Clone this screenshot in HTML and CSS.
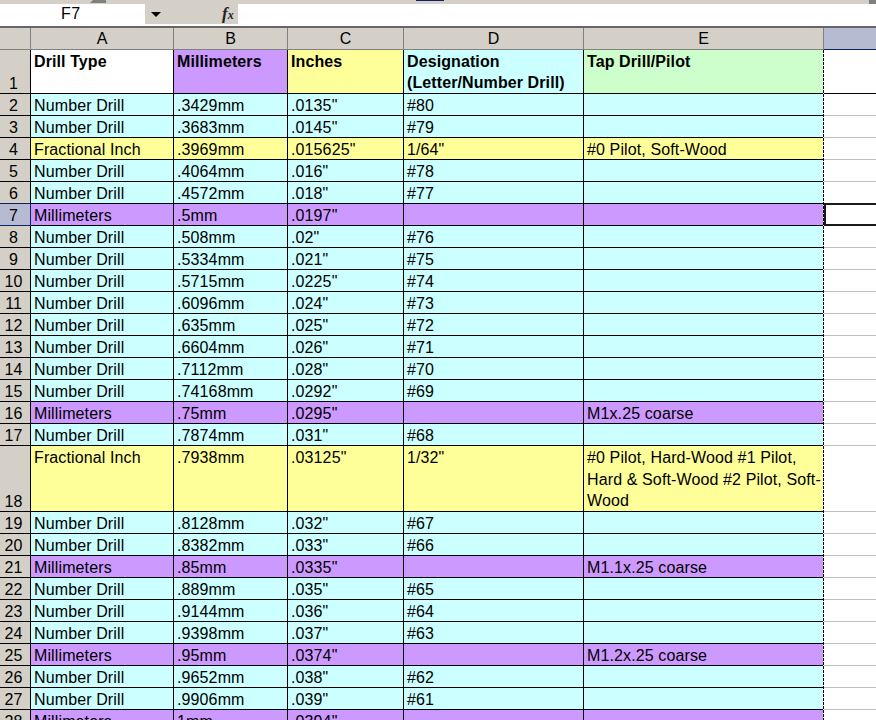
FILE: index.html
```html
<!DOCTYPE html>
<html lang="en">
<head>
    <meta charset="UTF-8">
    <meta name="viewport" content="width=device-width, initial-scale=1.0">
    <title>Drill Sizes</title>
    <link rel="stylesheet" href="styles.css">
</head>
<body>
    <div class="toolbar-edge">
        <div class="edge-handle"></div>
        <div class="edge-blue"></div>
        <div class="edge-corner"></div>
    </div>
    <div class="formula-bar">
        <div class="name-box">F7</div>
        <div class="bar-buttons">
            <span class="arrow"></span>
            <span class="fx">f<span class="fx-x">x</span></span>
        </div>
        <div class="formula-input"></div>
    </div>
    <div class="sheet">
        <table class="grid">
            <colgroup>
                <col class="c-row"><col class="c-a"><col class="c-b"><col class="c-c"><col class="c-d"><col class="c-e"><col class="c-f">
            </colgroup>
            <tr class="letters">
                <th class="row-no"></th><th>A</th><th>B</th><th>C</th><th>D</th><th>E</th><th class="col-on"></th>
            </tr>
            <tr class="head">
                <th class="row-no">1</th>
                <td class="white">Drill Type</td>
                <td class="mm">Millimeters</td>
                <td class="frac">Inches</td>
                <td class="num">Designation<br>(Letter/Number Drill)</td>
                <td class="green">Tap Drill/Pilot</td>
                <td class="empty black"></td>
            </tr>
            <tr class="num"><th class="row-no">2</th><td>Number Drill</td><td>.3429mm</td><td>.0135"</td><td>#80</td><td></td><td class="empty"></td></tr>
            <tr class="num"><th class="row-no">3</th><td>Number Drill</td><td>.3683mm</td><td>.0145"</td><td>#79</td><td></td><td class="empty"></td></tr>
            <tr class="frac"><th class="row-no">4</th><td>Fractional Inch</td><td>.3969mm</td><td>.015625"</td><td>1/64"</td><td>#0 Pilot, Soft-Wood</td><td class="empty"></td></tr>
            <tr class="num"><th class="row-no">5</th><td>Number Drill</td><td>.4064mm</td><td>.016"</td><td>#78</td><td></td><td class="empty"></td></tr>
            <tr class="num"><th class="row-no before-on">6</th><td>Number Drill</td><td>.4572mm</td><td>.018"</td><td>#77</td><td></td><td class="empty"></td></tr>
            <tr class="mm"><th class="row-no row-on">7</th><td>Millimeters</td><td>.5mm</td><td>.0197"</td><td></td><td></td><td class="empty"></td></tr>
            <tr class="num"><th class="row-no">8</th><td>Number Drill</td><td>.508mm</td><td>.02"</td><td>#76</td><td></td><td class="empty"></td></tr>
            <tr class="num"><th class="row-no">9</th><td>Number Drill</td><td>.5334mm</td><td>.021"</td><td>#75</td><td></td><td class="empty"></td></tr>
            <tr class="num"><th class="row-no">10</th><td>Number Drill</td><td>.5715mm</td><td>.0225"</td><td>#74</td><td></td><td class="empty"></td></tr>
            <tr class="num"><th class="row-no">11</th><td>Number Drill</td><td>.6096mm</td><td>.024"</td><td>#73</td><td></td><td class="empty"></td></tr>
            <tr class="num"><th class="row-no">12</th><td>Number Drill</td><td>.635mm</td><td>.025"</td><td>#72</td><td></td><td class="empty"></td></tr>
            <tr class="num"><th class="row-no">13</th><td>Number Drill</td><td>.6604mm</td><td>.026"</td><td>#71</td><td></td><td class="empty"></td></tr>
            <tr class="num"><th class="row-no">14</th><td>Number Drill</td><td>.7112mm</td><td>.028"</td><td>#70</td><td></td><td class="empty"></td></tr>
            <tr class="num"><th class="row-no">15</th><td>Number Drill</td><td>.74168mm</td><td>.0292"</td><td>#69</td><td></td><td class="empty"></td></tr>
            <tr class="mm"><th class="row-no">16</th><td>Millimeters</td><td>.75mm</td><td>.0295"</td><td></td><td>M1x.25 coarse</td><td class="empty"></td></tr>
            <tr class="num"><th class="row-no">17</th><td>Number Drill</td><td>.7874mm</td><td>.031"</td><td>#68</td><td></td><td class="empty"></td></tr>
            <tr class="frac tall"><th class="row-no">18</th><td>Fractional Inch</td><td>.7938mm</td><td>.03125"</td><td>1/32"</td><td class="wrap"><div class="wrap-text">#0 Pilot, Hard-Wood #1 Pilot, Hard &amp; Soft-Wood #2 Pilot, Soft-Wood</div></td><td class="empty"></td></tr>
            <tr class="num"><th class="row-no">19</th><td>Number Drill</td><td>.8128mm</td><td>.032"</td><td>#67</td><td></td><td class="empty"></td></tr>
            <tr class="num"><th class="row-no">20</th><td>Number Drill</td><td>.8382mm</td><td>.033"</td><td>#66</td><td></td><td class="empty"></td></tr>
            <tr class="mm"><th class="row-no">21</th><td>Millimeters</td><td>.85mm</td><td>.0335"</td><td></td><td>M1.1x.25 coarse</td><td class="empty"></td></tr>
            <tr class="num"><th class="row-no">22</th><td>Number Drill</td><td>.889mm</td><td>.035"</td><td>#65</td><td></td><td class="empty"></td></tr>
            <tr class="num"><th class="row-no">23</th><td>Number Drill</td><td>.9144mm</td><td>.036"</td><td>#64</td><td></td><td class="empty"></td></tr>
            <tr class="num"><th class="row-no">24</th><td>Number Drill</td><td>.9398mm</td><td>.037"</td><td>#63</td><td></td><td class="empty"></td></tr>
            <tr class="mm"><th class="row-no">25</th><td>Millimeters</td><td>.95mm</td><td>.0374"</td><td></td><td>M1.2x.25 coarse</td><td class="empty"></td></tr>
            <tr class="num"><th class="row-no">26</th><td>Number Drill</td><td>.9652mm</td><td>.038"</td><td>#62</td><td></td><td class="empty"></td></tr>
            <tr class="num"><th class="row-no">27</th><td>Number Drill</td><td>.9906mm</td><td>.039"</td><td>#61</td><td></td><td class="empty"></td></tr>
            <tr class="mm"><th class="row-no">28</th><td>Millimeters</td><td>1mm</td><td>.0394"</td><td></td><td></td><td class="empty"></td></tr>
        </table>
        <div class="print-line"></div>
        <div class="selected-cell"></div>
    </div>
</body>
</html>
```
FILE: styles.css
```css
* {
  margin: 0;
  padding: 0;
  box-sizing: border-box;
}

html, body {
  height: 100%;
  overflow: hidden;
}

body {
  font-family: "Liberation Sans", Arial, sans-serif;
  font-size: 16px;
  color: #000;
  background-color: #fff;
}

/* strip left over from the toolbar above */
.toolbar-edge {
  display: flex;
  height: 4px;
  background-color: #d4d0c8;
}

.edge-handle {
  width: 16px;
  height: 3px;
  margin-left: 90px;
  background-color: #808080;
  clip-path: polygon(3px 0, 100% 0, 100% 100%, 0 100%);
}

.edge-blue {
  width: 28px;
  height: 1px;
  margin-left: 310px;
  background-color: #0a246a;
}

.edge-corner {
  width: 7px;
  margin-left: auto;
  background-color: #808080;
}

/* name box and formula bar */
.formula-bar {
  display: flex;
  height: 24px;
  padding-bottom: 2px;
  border-bottom: 2px solid #666;
}

.name-box {
  width: 145px;
  padding-left: 61px;
  line-height: 20px;
  letter-spacing: 0.5px;
}

.bar-buttons {
  display: flex;
  align-items: center;
  width: 93px;
  padding-left: 6px;
  background-color: #d4d0c8;
}

.arrow {
  width: 0;
  height: 0;
  border-left: 5px solid transparent;
  border-right: 5px solid transparent;
  border-top: 5px solid #000;
}

.fx {
  margin-left: 61px;
  font-family: "Liberation Serif", serif;
  font-style: italic;
  font-weight: bold;
  font-size: 17px;
  color: #222;
}

.fx-x {
  font-size: 12px;
}

.formula-input {
  flex: 1;
}

/* the sheet */
.sheet {
  position: relative;
  height: 692px;
  overflow: hidden;
}

.grid {
  table-layout: fixed;
  width: 876px;
  border-collapse: separate;
  border-spacing: 0;
}

.c-row { width: 31px; }
.c-a { width: 143px; }
.c-b { width: 114px; }
.c-c { width: 116px; }
.c-d { width: 180px; }
.c-e { width: 240px; }
.c-f { width: 52px; }

tr {
  height: 22px;
}

td {
  padding: 3px 0 0 3px;
  border-right: 1px solid #000;
  border-bottom: 1px solid #000;
  white-space: nowrap;
  overflow: hidden;
  line-height: 18px;
  font-weight: normal;
  letter-spacing: 0.12px;
}

th {
  font-weight: normal;
  background-color: #d4d0c8;
}

.letters th {
  border-right: 1px solid #808080;
  border-bottom: 1px solid #808080;
  line-height: 21px;
}

.letters .col-on {
  border-right: none;
  border-bottom: 1px solid #0a246a;
  background-color: #b6bbd1;
}

.row-no {
  padding-right: 3px;
  border-right: 1px solid #000;
  border-bottom: 1px solid #000;
  vertical-align: bottom;
  line-height: 18px;
}

.row-on {
  background-color: #b6bbd1;
  border-right-color: #0a246a;
  border-bottom-color: #0a246a;
}

.before-on {
  border-bottom-color: #0a246a;
}

.num { background-color: #ccffff; }
.frac { background-color: #ffff99; }
.mm { background-color: #cc99ff; }
.white { background-color: #fff; }
.green { background-color: #ccffcc; }

.head {
  height: 44px;
}

.head td {
  padding-top: 1px;
  vertical-align: top;
  font-weight: bold;
  line-height: 21px;
  letter-spacing: 0.1px;
}

.tall {
  height: 66px;
}

.tall td {
  vertical-align: top;
}

.tall .wrap {
  padding-top: 1px;
  white-space: normal;
}

.wrap-text {
  height: 64px;
  line-height: 21.5px;
}

.empty {
  background-color: #fff;
  border-right: none;
  border-bottom-color: #c0c0c0;
}

.empty.black {
  border-bottom-color: #000;
}

/* cursor on F7 and the dashed page break sit over the grid */
.selected-cell {
  position: absolute;
  top: 175px;
  left: 824px;
  width: 60px;
  height: 23px;
  border: 2px solid #1a1a1a;
}

.print-line {
  position: absolute;
  top: 22px;
  bottom: 0;
  left: 823px;
  width: 1px;
  background-image: repeating-linear-gradient(to bottom, #000 0, #000 3px, #fff 3px, #fff 4px);
}
```
